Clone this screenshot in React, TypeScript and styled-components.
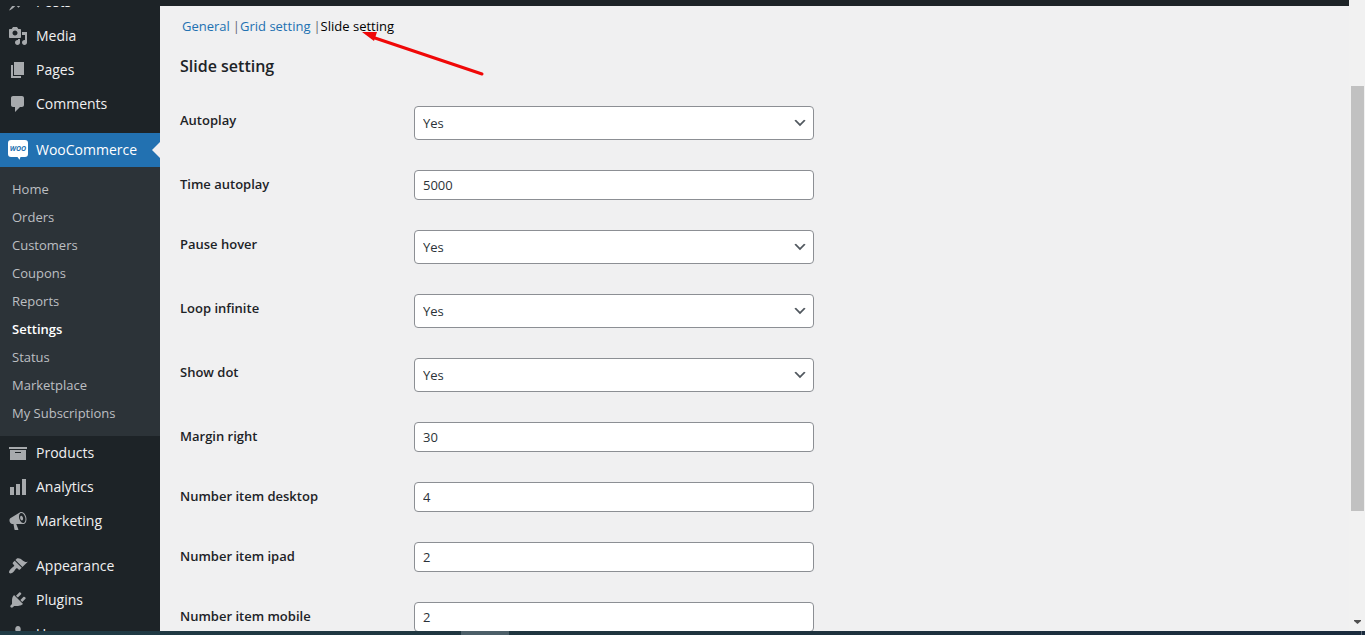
import React from "react";
import styled, { createGlobalStyle } from "styled-components";

const GlobalStyle = createGlobalStyle`
  * { box-sizing: border-box; }
  body {
    margin: 0;
    background: #f0f0f1;
    color: #3c434a;
    font: 13px/20px "Segoe UI", "Open Sans", "Noto Sans", sans-serif;
  }
  ul { list-style: none; margin: 0; padding: 0; }
  a { text-decoration: none; }
`;

const Screen = styled.div`
  display: flex;
  flex-direction: column;
  height: 100vh;
  overflow: hidden;
`;

const Viewport = styled.div`
  display: flex;
  flex: 1;
  min-height: 0;
`;

const Page = styled.div`
  display: flex;
  flex-direction: column;
  flex: 1;
  min-width: 0;
`;

const AdminBar = styled.header`
  flex: none;
  height: 6px;
  background: #1d2327;
`;

const Columns = styled.div`
  display: flex;
  flex: 1;
  min-height: 0;
`;

const Sidebar = styled.nav`
  flex: none;
  width: 160px;
  overflow: hidden;
  background: #1d2327;
`;

/* The menu is scrolled up, so its first entry is partly hidden by the admin bar. */
const Menu = styled.ul`
  && { margin-top: -21px; }
`;

const MenuGroup = styled.li<{ $gap?: number }>`
  padding-top: ${(p) => p.$gap ?? 0}px;
`;

const MenuLink = styled.a<{ $current?: boolean }>`
  position: relative;
  display: flex;
  align-items: center;
  gap: 8px;
  height: 34px;
  padding-left: 8px;
  font-size: 14px;
  color: ${(p) => (p.$current ? "#fff" : "#f0f0f1")};
  background: ${(p) => (p.$current ? "#2271b1" : "transparent")};

  &::after {
    content: "";
    display: ${(p) => (p.$current ? "block" : "none")};
    position: absolute;
    right: 0;
    top: 9px;
    border: 8px solid transparent;
    border-left-width: 0;
    border-right-color: #f0f0f1;
  }
`;

const MenuIcon = styled.svg`
  flex: none;
  width: 20px;
  height: 20px;
  fill: #a7aaad;
`;

const LogoText = styled.text`
  font: italic 700 7px "Liberation Sans Narrow", "Open Sans", sans-serif;
  fill: #2271b1;
`;

const Submenu = styled.ul`
  && { padding: 8px 0 9px; }
  background: #2c3338;
`;

const SubmenuLink = styled.a<{ $current?: boolean }>`
  display: block;
  padding: 4px 12px;
  color: ${(p) => (p.$current ? "#fff" : "#bcbfc2")};
  font-weight: ${(p) => (p.$current ? 600 : 400)};
`;

const Content = styled.main`
  flex: 1;
  min-width: 0;
  overflow: hidden;
  padding: 10px 20px 0;
`;

const Tabs = styled.ul`
  display: flex;
  && { padding-left: 2px; }
`;

const Tab = styled.li`
  position: relative;
  & + &::before {
    content: "|";
    margin-left: 3px;
    color: #646970;
  }
`;

const TabLink = styled.a<{ $current?: boolean }>`
  color: ${(p) => (p.$current ? "#000" : "#2271b1")};
`;

const Pointer = styled.svg`
  position: absolute;
  left: 52px;
  top: 15px;
  width: 122px;
  height: 46px;
`;

const Heading = styled.h2`
  margin: 18px 0 13px;
  color: #1d2327;
  font-size: 16px;
  line-height: 24px;
  font-weight: 600;
`;

const Field = styled.div`
  display: flex;
  align-items: flex-start;
  padding: 15px 0;
`;

const Label = styled.label`
  flex: none;
  width: 234px;
  padding-top: 4px;
  color: #1d2327;
  font-size: 13px;
  font-weight: 600;
`;

const Control = styled.div`
  position: relative;
  display: flex;
  width: 400px;
`;

const controlStyle = `
  width: 100%;
  margin: 0;
  padding: 0 8px;
  border: 1px solid #8c8f94;
  border-radius: 4px;
  background: #fff;
  color: #2c3338;
  font: 13px/20px "Segoe UI", "Open Sans", "Noto Sans", sans-serif;
`;

const TextInput = styled.input`
  ${controlStyle}
  height: 30px;
`;

const Select = styled.select`
  ${controlStyle}
  height: 34px;
  appearance: none;
`;

const Chevron = styled.svg`
  position: absolute;
  right: 6px;
  top: 9px;
  width: 16px;
  height: 16px;
  fill: #50575e;
  pointer-events: none;
`;

const Scrollbar = styled.div`
  display: flex;
  flex-direction: column;
  flex: none;
  width: 16px;
  padding: 0 1px 0 2px;
  background: #f1f1f1;
`;

const ScrollSpace = styled.div<{ $share: number }>`
  flex: ${(p) => p.$share} 1 0;
`;

const ScrollThumb = styled.div`
  flex: 425 1 0;
  background: #c1c1c1;
`;

const ScrollArrow = styled.svg`
  width: 13px;
  height: 19px;
  fill: #505050;
`;

const Taskbar = styled.footer`
  display: flex;
  justify-content: space-between;
  flex: none;
  height: 4px;
  padding: 0 3px 0 461px;
  background: linear-gradient(90deg, #203b45, #1f343e 50%, #1a2b3d);
`;

const TaskbarItem = styled.div`
  width: 48px;
  background: #4c5f68;
`;

const ShowDesktop = styled.div`
  width: 1px;
  background: #5f6b78;
`;

const icons: Record<string, string> = {
  Posts:
    "M10.44 3.02l1.82-1.82 6.36 6.35-1.83 1.82c-1.05-.68-2.48-.57-3.41.36l-.75.75c-.92.93-1.04 2.35-.35 3.41l-1.83 1.82-2.41-2.41-2.8 2.79c-.42.42-3.38 2.71-3.8 2.29s1.86-3.39 2.28-3.81l2.79-2.79L4.1 9.36l1.83-1.82c1.05.69 2.48.57 3.4-.36l.75-.75c.93-.92 1.05-2.35.36-3.41z",
  Media:
    "M13 11V4c0-.55-.45-1-1-1h-1.67L9 1H5L3.67 3H2c-.55 0-1 .45-1 1v7c0 .55.45 1 1 1h10c.55 0 1-.45 1-1zM7 4.5c1.38 0 2.5 1.12 2.5 2.5S8.38 9.5 7 9.5 4.5 8.38 4.5 7 5.62 4.5 7 4.5zM14 6h5v10.5c0 1.38-1.12 2.5-2.5 2.5S14 17.88 14 16.5s1.12-2.5 2.5-2.5c.17 0 .34.02.5.05V9h-3V6zm-4 8.05V13h2v3.5c0 1.38-1.12 2.5-2.5 2.5S7 17.88 7 16.5 8.12 14 9.5 14c.17 0 .34.02.5.05z",
  Pages: "M6 15V2h10v13H6zm-1 1h8v2H3V5h2v11z",
  Comments:
    "M5 2h9c1.1 0 2 .9 2 2v7c0 1.1-.9 2-2 2h-2l-5 5v-5H5c-1.1 0-2-.9-2-2V4c0-1.1.9-2 2-2z",
  Products: "M19 4v2H1V4h18zM2 7h16v10H2V7zm11 3V9H7v1h6z",
  Analytics: "M18 18V2h-4v16h4zm-6 0V7H8v11h4zm-6 0v-8H2v8h4z",
  Marketing:
    "M18.15 5.94c.46 1.62.38 3.22-.02 4.48-.42 1.28-1.26 2.18-2.3 2.48-.16.06-.26.06-.4.06-.06.02-.12.02-.18.02-.06.02-.14.02-.22.02h-6.8l2.22 5.5c.02.14-.06.26-.14.34-.08.1-.24.16-.34.16H6.95c-.1 0-.26-.06-.34-.16-.08-.08-.16-.2-.14-.34l-1-5.5H4.25l-.02-.02c-.5.06-1.08-.18-1.54-.62s-.88-1.08-1.06-1.88c-.24-.8-.2-1.56-.02-2.2.18-.62.58-1.08 1.06-1.3l.02-.02 9-5.4c.1-.06.18-.1.24-.16.06-.04.14-.08.24-.12.16-.08.28-.12.5-.18 1.04-.3 2.24.1 3.22.98s1.84 2.24 2.26 3.86zm-2.58 5.98h-.02c.4-.1.74-.34 1.04-.7.58-.7.86-1.76.86-3.04 0-.64-.1-1.3-.28-1.98-.34-1.36-1.02-2.5-1.78-3.24s-1.68-1.1-2.46-.88c-.82.22-1.4.96-1.7 2-.32 1.04-.28 2.36.06 3.72.38 1.36 1 2.5 1.8 3.24.78.74 1.62 1.1 2.48.88zm-2.54-7.08c.22-.04.42-.02.62.04.38.16.76.48 1.02 1s.42 1.2.42 1.78c0 .3-.04.56-.12.8-.18.48-.44.84-.86.94-.34.1-.8-.06-1.14-.4s-.64-.86-.78-1.5c-.18-.62-.12-1.24.02-1.72s.48-.84.82-.94z",
  Appearance:
    "M14.48 11.06L7.41 3.99l1.5-1.5c.5-.56 2.3-.47 3.51.32 1.21.8 1.43 1.28 2.91 2.1 1.18.64 2.45 1.26 4.45.85zm-.71.71L6.7 4.7 4.93 6.47c-.39.39-.39 1.02 0 1.41l1.06 1.06c.39.39.39 1.03 0 1.42-.6.6-1.43 1.11-2.21 1.69-.35.26-.7.53-1.01.84C1.43 14.23.4 16.08 1.4 17.07c.99 1 2.84-.03 4.18-1.36.31-.31.58-.66.85-1.02.57-.78 1.08-1.61 1.69-2.21.39-.39 1.02-.39 1.41 0l1.06 1.06c.39.39 1.02.39 1.41 0z",
  Plugins:
    "M13.11 4.36L9.87 7.6 8 5.73l3.24-3.24c.35-.34 1.05-.2 1.56.32.52.51.66 1.21.31 1.55zm-8 1.77l.91-1.12 9.01 9.01-1.19.84c-.71.71-2.63 1.16-3.82 1.16H6.14L4.9 17.26c-.59.59-1.54.59-2.12 0-.59-.58-.59-1.53 0-2.12l1.24-1.24v-3.88c0-1.13.4-3.19 1.09-3.89zm7.26 3.97l3.24-3.24c.34-.35 1.04-.21 1.55.31.52.51.66 1.21.31 1.55l-3.24 3.25z",
  Users:
    "M10 9.25c-2.27 0-2.73-3.44-2.73-3.44C7 4.02 7.82 2 9.97 2c2.16 0 2.98 2.02 2.71 3.81 0 0-.41 3.44-2.68 3.44zm0 2.57L12.72 10c2.39 0 4.52 2.33 4.52 4.53v2.49s-3.65 1.13-7.24 1.13c-3.65 0-7.24-1.13-7.24-1.13v-2.49c0-2.25 1.94-4.48 4.47-4.48z",
};

const submenu = [
  "Home",
  "Orders",
  "Customers",
  "Coupons",
  "Reports",
  "Settings",
  "Status",
  "Marketplace",
  "My Subscriptions",
];

const fields = [
  { id: "autoplay", label: "Autoplay", value: "Yes", select: true },
  { id: "time", label: "Time autoplay", value: "5000" },
  { id: "pause", label: "Pause hover", value: "Yes", select: true },
  { id: "loop", label: "Loop infinite", value: "Yes", select: true },
  { id: "dot", label: "Show dot", value: "Yes", select: true },
  { id: "margin", label: "Margin right", value: "30" },
  { id: "desktop", label: "Number item desktop", value: "4" },
  { id: "ipad", label: "Number item ipad", value: "2" },
  { id: "mobile", label: "Number item mobile", value: "2" },
];

function Item({ name, gap }: { name: string; gap?: number }) {
  return (
    <MenuGroup $gap={gap}>
      <MenuLink href="#">
        <MenuIcon viewBox="0 0 20 20" aria-hidden="true">
          <path d={icons[name]} />
        </MenuIcon>
        {name}
      </MenuLink>
    </MenuGroup>
  );
}

function WooLogo() {
  return (
    <MenuIcon viewBox="0 0 20 20" aria-hidden="true">
      <path
        fill="#fff"
        d="M3 0h14a3 3 0 0 1 3 3v11a3 3 0 0 1-3 3h-4.500l-1 2.800L9.500 17H3a3 3 0 0 1-3-3V3a3 3 0 0 1 3-3z"
      />
      <LogoText x="10" y="11" textAnchor="middle">
        WOO
      </LogoText>
    </MenuIcon>
  );
}

export default function App() {
  return (
    <Screen>
      <GlobalStyle />
      <Viewport>
        <Page>
          <AdminBar />
          <Columns>
            <Sidebar aria-label="Main menu">
              <Menu>
                <Item name="Posts" />
                <Item name="Media" />
                <Item name="Pages" />
                <Item name="Comments" />
                <MenuGroup $gap={12}>
                  <MenuLink href="#" $current>
                    <WooLogo />
                    WooCommerce
                  </MenuLink>
                  <Submenu>
                    {submenu.map((name) => (
                      <li key={name}>
                        <SubmenuLink href="#" $current={name === "Settings"}>
                          {name}
                        </SubmenuLink>
                      </li>
                    ))}
                  </Submenu>
                </MenuGroup>
                <Item name="Products" />
                <Item name="Analytics" />
                <Item name="Marketing" />
                <Item name="Appearance" gap={11} />
                <Item name="Plugins" />
                <Item name="Users" />
              </Menu>
            </Sidebar>
            <Content>
              <Tabs>
                <Tab>
                  <TabLink href="#">General</TabLink>
                </Tab>
                <Tab>
                  <TabLink href="#">Grid setting</TabLink>
                </Tab>
                <Tab>
                  <TabLink href="#" $current>
                    Slide setting
                  </TabLink>
                  <Pointer viewBox="0 0 122 46" aria-hidden="true">
                    <path d="M10 6L120 43" stroke="#f00808" strokeWidth="3" strokeLinecap="round" />
                    <path d="M0 1L15 1L12 10Z" fill="#f00808" />
                  </Pointer>
                </Tab>
              </Tabs>
              <Heading>Slide setting</Heading>
              <form>
                {fields.map((f) => (
                  <Field key={f.id}>
                    <Label htmlFor={f.id}>{f.label}</Label>
                    <Control>
                      {f.select ? (
                        <>
                          <Select id={f.id} defaultValue={f.value}>
                            <option>Yes</option>
                            <option>No</option>
                          </Select>
                          <Chevron viewBox="0 0 20 20" aria-hidden="true">
                            <path d="M5 6l5 5 5-5 2 1-7 7-7-7 2-1z" />
                          </Chevron>
                        </>
                      ) : (
                        <TextInput id={f.id} type="text" defaultValue={f.value} />
                      )}
                    </Control>
                  </Field>
                ))}
              </form>
            </Content>
          </Columns>
        </Page>
        <Scrollbar aria-hidden="true">
          <ScrollSpace $share={86} />
          <ScrollThumb />
          <ScrollSpace $share={101} />
          <ScrollArrow viewBox="0 0 13 19">
            <path d="M3 8h7v1L6.500 12L3 9z" />
          </ScrollArrow>
        </Scrollbar>
      </Viewport>
      <Taskbar>
        <TaskbarItem />
        <ShowDesktop />
      </Taskbar>
    </Screen>
  );
}
